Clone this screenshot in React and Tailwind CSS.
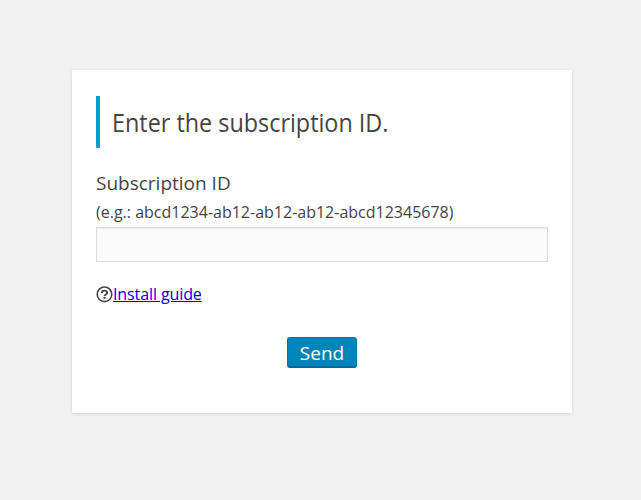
import React, { useState } from 'react';

const HelpIcon = () => (
    <svg width="17" height="17" viewBox="0 0 17 17" fill="none" className="shrink-0 text-[#444444]">
        <circle cx="8.5" cy="8.3" r="7.3" stroke="currentColor" strokeWidth="1.6" />
        <path d="M5.9 6.9c0-1.4 1.1-2.3 2.6-2.3s2.6.9 2.6 2.1c0 1.7-2.5 1.8-2.5 3.3" stroke="currentColor" strokeWidth="1.9" />
        <path d="M7.5 10.9h2.1v2H7.5z" fill="currentColor" />
    </svg>
);

const App = () => {
    const [subscriptionId, setSubscriptionId] = useState('');

    return (
        <main className="min-h-screen bg-[#f1f1f1] pt-[70px] pl-[72px] font-['Open_Sans','Noto_Sans',sans-serif] text-[#444444]">
            <form
                onSubmit={(e) => e.preventDefault()}
                className="flex h-[343px] w-[500px] flex-col bg-white px-6 pt-[26px] shadow-[0_1px_3px_rgba(0,0,0,0.13)]"
            >
                <h1 className="flex h-[52px] items-center border-l-4 border-[#00a0d2] pt-0.5 pl-3 text-[25px]">
                    <span className="inline-block origin-left scale-x-[0.935] whitespace-nowrap">Enter the subscription ID.</span>
                </h1>
                <label htmlFor="subscription-id" className="mt-[22px] flex flex-col">
                    <span className="text-[19px] leading-[26px]">Subscription ID</span>
                    <span className="mt-1 text-base leading-6 whitespace-nowrap">(e.g.: abcd1234-ab12-ab12-ab12-abcd12345678)</span>
                </label>
                <input
                    id="subscription-id"
                    type="text"
                    value={subscriptionId}
                    onChange={(e) => setSubscriptionId(e.target.value)}
                    className="mt-[3px] h-[35px] w-full border border-[#dddddd] bg-[#fbfbfb] px-2 shadow-[inset_0_1px_2px_rgba(0,0,0,0.07)] outline-none"
                />
                <div className="mt-5 flex h-6 items-center">
                    <HelpIcon />
                    <a href="#guide" className="text-base tracking-[-0.1px] text-[#0000ee] underline">Install guide</a>
                </div>
                <button
                    type="submit"
                    className="mt-[31px] h-[31px] w-[70px] self-center rounded-[3px] border border-[#0073aa] border-b-[#006799] bg-[#0085ba] pt-px text-[19px] leading-none text-white shadow-[inset_0_-1px_0_#006799]"
                >
                    Send
                </button>
            </form>
        </main>
    );
};

export default App;
